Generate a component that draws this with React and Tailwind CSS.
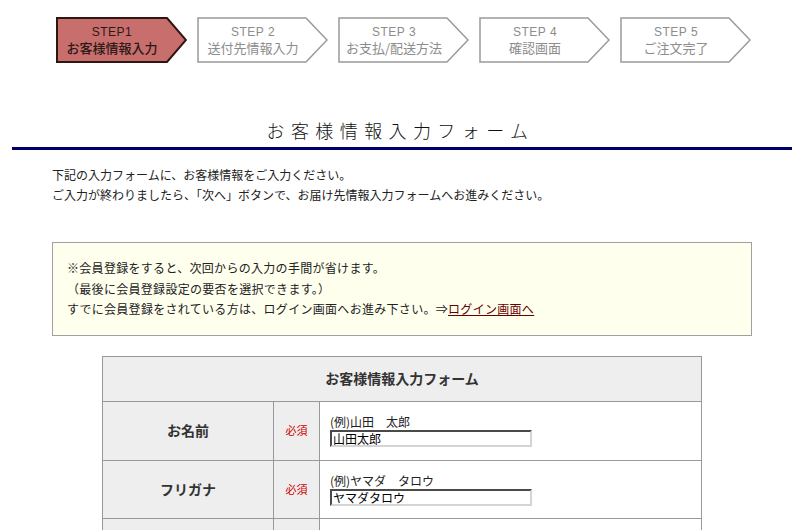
import React from 'react'

const steps = [
  { n: 'STEP1', label: 'お客様情報入力', active: true },
  { n: 'STEP 2', label: '送付先情報入力' },
  { n: 'STEP 3', label: 'お支払/配送方法' },
  { n: 'STEP 4', label: '確認画面' },
  { n: 'STEP 5', label: 'ご注文完了' },
]

const rows = [
  { label: 'お名前', example: '(例)山田　太郎', value: '山田太郎', h: 'h-[59px]' },
  { label: 'フリガナ', example: '(例)ヤマダ　タロウ', value: 'ヤマダタロウ', h: 'h-[58px]' },
]

function Step({ step }) {
  return (
    <div className="relative w-[131px] h-[46px] shrink-0">
      <svg className="absolute inset-0" width="131" height="46" viewBox="0 0 131 46">
        {step.active ? (
          <polygon points="1,1 111,1 130,23 111,45 1,45" fill="#c86e6c" stroke="#2e1512" strokeWidth="2" />
        ) : (
          <polygon points="1,1 109,1 130,23 109,45 1,45" fill="#ffffff" stroke="#9a9a9a" strokeWidth="1.5" />
        )}
      </svg>
      <div
        className={`relative flex flex-col items-center justify-center w-[112px] h-full leading-[16px] ${
          step.active ? 'text-[#2a1a18] font-medium' : 'text-[#8c8c8c]'
        }`}
      >
        <span className="text-[12px] tracking-[0.5px] font-['Liberation_Sans',sans-serif]">{step.n}</span>
        <span className="text-[13px]">{step.label}</span>
      </div>
    </div>
  )
}

export default function App() {
  return (
    <div className="w-[795px] min-h-[530px] bg-white text-[#222] font-['Noto_Sans_CJK_JP','Liberation_Sans',sans-serif]">
      {/* Steps */}
      <div className="flex gap-[10px] pl-[56px] pt-[17px]">
        {steps.map((s) => (
          <Step key={s.n} step={s} />
        ))}
      </div>

      {/* Title */}
      <h1 className="mt-[55px] text-center text-[18px] leading-[24px] tracking-[6.4px] font-light text-[#111] pl-[6px]">
        お客様情報入力フォーム
      </h1>
      <div className="mt-[5px] ml-[12px] mr-[3px] h-[3px] bg-[#000066]"></div>

      {/* Intro */}
      <div className="mt-[15px] pl-[52px] text-[12px] leading-[20px] text-[#222]">
        <p>下記の入力フォームに、お客様情報をご入力ください。</p>
        <p>ご入力が終わりましたら、「次へ」ボタンで、お届け先情報入力フォームへお進みください。</p>
      </div>

      {/* Member note */}
      <div className="mt-[37px] ml-[52px] w-[700px] border border-[#a0a0a0] bg-[#ffffee] px-[14px] py-[15px] text-[12px] leading-[20.5px] tracking-[0.3px] text-[#222]">
        <p>※会員登録をすると、次回からの入力の手間が省けます。</p>
        <p>（最後に会員登録設定の要否を選択できます。）</p>
        <p>
          すでに会員登録をされている方は、ログイン画面へお進み下さい。⇒
          <a href="#" className="text-[#660000] underline">ログイン画面へ</a>
        </p>
      </div>

      {/* Form table */}
      <table className="mt-[20px] ml-[102px] w-[600px] border-collapse text-[12px] text-[#222]">
        <tbody>
          <tr className="h-[45px]">
            <th colSpan={3} className="border border-[#999] bg-[#eeeeee] text-[14px] font-bold text-[#333]">
              お客様情報入力フォーム
            </th>
          </tr>
          {rows.map((r) => (
            <tr key={r.label} className={r.h}>
              <th className="w-[171px] border border-[#999] bg-[#eeeeee] text-[14px] font-bold text-[#333]">
                {r.label}
              </th>
              <td className="w-[46px] border border-[#999] bg-[#eeeeee] text-center text-[11px] text-[#cc0000]">
                必須
              </td>
              <td className="border border-[#999] bg-white pl-[10px]">
                <div className="leading-[16px]">{r.example}</div>
                <input
                  readOnly
                  value={r.value}
                  className="block w-[202px] h-[17px] border-2 border-t-[#4a4a4a] border-l-[#4a4a4a] border-r-[#d4d4d4] border-b-[#d4d4d4] px-[1px] text-[12px] leading-[13px] text-black outline-none"
                />
              </td>
            </tr>
          ))}
          <tr className="h-[58px]">
            <th className="border border-[#999] bg-[#eeeeee]"></th>
            <td className="border border-[#999] bg-[#eeeeee]"></td>
            <td className="border border-[#999] bg-white"></td>
          </tr>
        </tbody>
      </table>
    </div>
  )
}
